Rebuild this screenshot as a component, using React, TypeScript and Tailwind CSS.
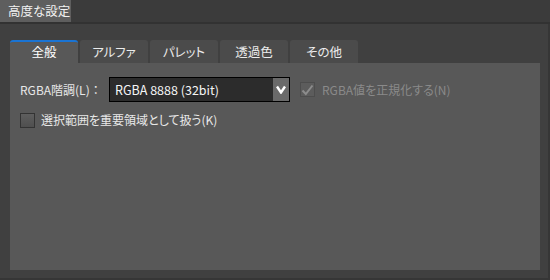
const tabs = ['全般', 'アルファ', 'パレット', '透過色', 'その他']

const font = { fontFamily: '"Noto Sans CJK JP", "Noto Sans", sans-serif' }

export default function App() {
  return (
    <div
      className="w-[550px] h-[280px] bg-[#404040] flex flex-col text-[12px] [font-feature-settings:'palt']"
      style={font}
    >
      {/* title strip */}
      <div className="h-[22px] bg-[#3b3b3b] flex shrink-0">
        <div className="w-[71px] bg-[#5e5e5e] text-[#f2f2f2] text-[12.5px] leading-[22px] pl-[8px]">
          高度な設定
        </div>
      </div>
      <div className="h-[2px] bg-[#323232] shrink-0" />

      <div className="flex-1 flex flex-col pl-[10px] pr-[8px] pt-[16px] pb-[8px] border-r-2 border-b-2 border-[#363636]">
        {/* tabs */}
        <div className="flex gap-[2px] h-[23px] shrink-0">
          {tabs.map((t, i) => (
            <div
              key={t}
              className={
                i === 0
                  ? 'w-[68px] rounded-t-[3px] bg-[#585858] border-t-2 border-[#1a74d4] text-white text-[12.5px] flex items-center justify-center'
                  : 'w-[68px] rounded-t-[3px] bg-[#4b4b4b] text-[#ececec] text-[12.5px] flex items-center justify-center pt-[1px]'
              }
            >
              {t}
            </div>
          ))}
        </div>

        {/* panel */}
        <div className="flex-1 bg-[#585858] pl-[10px] pt-[14px] flex flex-col gap-[9px]">
          <div className="flex items-center h-[25px]">
            <span className="text-[#e8e8e8] w-[89px]">
              RGBA階調(L)<span className="[font-feature-settings:normal]">：</span>
            </span>
            <div className="w-[181px] h-[25px] border border-black bg-[#2c2c2c] flex">
              <span className="flex-1 text-[#f4f4f4] text-[12.5px] leading-[23px] pl-[5px]">
                RGBA 8888 (32bit)
              </span>
              <div className="w-[16px] bg-[#6a6a6a] flex items-center justify-center">
                <svg width="10" height="9" viewBox="0 0 10 9">
                  <path d="M1 1.5 L5 7.5 L9 1.5" fill="none" stroke="#ffffff" strokeWidth="2.4" />
                </svg>
              </div>
            </div>
            <div className="ml-[10px] w-[15px] h-[15px] border border-[#4d4d4d] bg-[#5c5c5c] flex items-center justify-center">
              <svg width="13" height="12" viewBox="0 0 13 12">
                <path d="M1.5 6.5 L4.8 10 L11.5 1.5" fill="none" stroke="#8c8c8c" strokeWidth="2" />
              </svg>
            </div>
            <span className="ml-[7px] text-[#8a8a8a]">RGBA値を正規化する(N)</span>
          </div>

          <div className="flex items-center">
            <div className="w-[15px] h-[15px] border border-[#333333] bg-gradient-to-b from-[#5e5e5e] to-[#4f4f4f]" />
            <span className="ml-[6px] text-[#e8e8e8]">選択範囲を重要領域として扱う(K)</span>
          </div>
        </div>
      </div>
    </div>
  )
}
